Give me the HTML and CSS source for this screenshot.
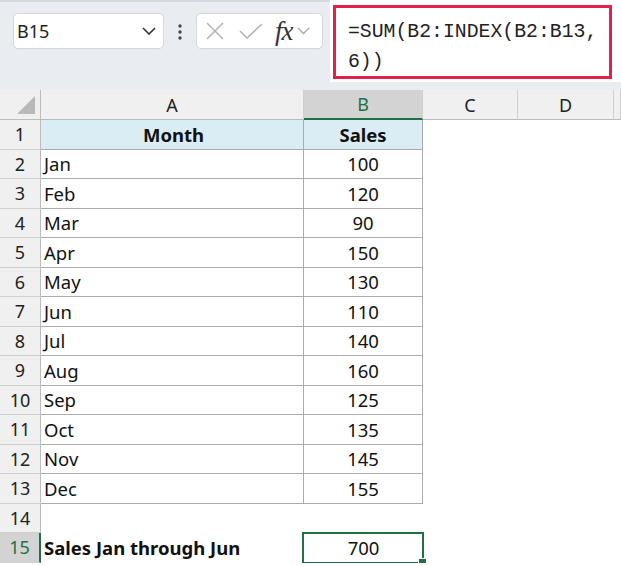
FILE: index.html
```html
<!DOCTYPE html>
<html lang="en">
<head>
<meta charset="UTF-8">
<title>Sales - SUM with INDEX</title>
<link rel="stylesheet" href="styles.css">
</head>
<body>

<!-- formula bar -->
<div class="toolbar">
    <div class="namebox">
        <span class="cellref">B15</span>
        <svg class="chevron" width="14" height="8" viewBox="0 0 14 8"><path d="M1 1 L7 7 L13 1" fill="none" stroke="#333" stroke-width="1.6"/></svg>
    </div>
    <svg class="dots" width="6" height="16" viewBox="0 0 6 16"><circle cx="3" cy="2" r="1.7" fill="#444"/><circle cx="3" cy="8" r="1.7" fill="#444"/><circle cx="3" cy="14" r="1.7" fill="#444"/></svg>
    <div class="fxbox">
        <svg class="btn-x" width="18" height="18" viewBox="0 0 18 18"><path d="M1 1 L17 17 M17 1 L1 17" stroke="#b4b4b4" stroke-width="1.6"/></svg>
        <svg class="btn-ok" width="24" height="16" viewBox="0 0 24 16"><path d="M1 8 L8 15 L23 1" fill="none" stroke="#b4b4b4" stroke-width="1.6"/></svg>
        <span class="fx">fx</span>
        <svg class="chevron-sm" width="13" height="8" viewBox="0 0 13 8"><path d="M1 1 L6.5 6.5 L12 1" fill="none" stroke="#a8a8a8" stroke-width="1.4"/></svg>
    </div>
    <div class="formula">
        <div class="formula-box">=SUM(B2:INDEX(B2:B13,<br>6))</div>
    </div>
</div>

<!-- worksheet -->
<div class="sheet">
    <div class="row head">
        <div class="corner"><svg width="18" height="18" viewBox="0 0 18 18"><path d="M18 0 L18 18 L0 18 Z" fill="#b9b9b9"/></svg></div>
        <div class="colhead">A</div>
        <div class="colhead active">B</div>
        <div class="colhead">C</div>
        <div class="colhead">D</div>
        <div class="colhead"></div>
    </div>
    <div class="row">
        <div class="rowhead">1</div>
        <div class="cell tb title">Month</div>
        <div class="cell tb title num">Sales</div>
        <div class="cell"></div><div class="cell"></div><div class="cell"></div>
    </div>
    <div class="row">
        <div class="rowhead">2</div>
        <div class="cell tb">Jan</div>
        <div class="cell tb num">100</div>
        <div class="cell"></div><div class="cell"></div><div class="cell"></div>
    </div>
    <div class="row">
        <div class="rowhead">3</div>
        <div class="cell tb">Feb</div>
        <div class="cell tb num">120</div>
        <div class="cell"></div><div class="cell"></div><div class="cell"></div>
    </div>
    <div class="row">
        <div class="rowhead">4</div>
        <div class="cell tb">Mar</div>
        <div class="cell tb num">90</div>
        <div class="cell"></div><div class="cell"></div><div class="cell"></div>
    </div>
    <div class="row">
        <div class="rowhead">5</div>
        <div class="cell tb">Apr</div>
        <div class="cell tb num">150</div>
        <div class="cell"></div><div class="cell"></div><div class="cell"></div>
    </div>
    <div class="row">
        <div class="rowhead">6</div>
        <div class="cell tb">May</div>
        <div class="cell tb num">130</div>
        <div class="cell"></div><div class="cell"></div><div class="cell"></div>
    </div>
    <div class="row">
        <div class="rowhead">7</div>
        <div class="cell tb">Jun</div>
        <div class="cell tb num">110</div>
        <div class="cell"></div><div class="cell"></div><div class="cell"></div>
    </div>
    <div class="row">
        <div class="rowhead">8</div>
        <div class="cell tb">Jul</div>
        <div class="cell tb num">140</div>
        <div class="cell"></div><div class="cell"></div><div class="cell"></div>
    </div>
    <div class="row">
        <div class="rowhead">9</div>
        <div class="cell tb">Aug</div>
        <div class="cell tb num">160</div>
        <div class="cell"></div><div class="cell"></div><div class="cell"></div>
    </div>
    <div class="row">
        <div class="rowhead">10</div>
        <div class="cell tb">Sep</div>
        <div class="cell tb num">125</div>
        <div class="cell"></div><div class="cell"></div><div class="cell"></div>
    </div>
    <div class="row">
        <div class="rowhead">11</div>
        <div class="cell tb">Oct</div>
        <div class="cell tb num">135</div>
        <div class="cell"></div><div class="cell"></div><div class="cell"></div>
    </div>
    <div class="row">
        <div class="rowhead">12</div>
        <div class="cell tb">Nov</div>
        <div class="cell tb num">145</div>
        <div class="cell"></div><div class="cell"></div><div class="cell"></div>
    </div>
    <div class="row">
        <div class="rowhead">13</div>
        <div class="cell tb">Dec</div>
        <div class="cell tb num">155</div>
        <div class="cell"></div><div class="cell"></div><div class="cell"></div>
    </div>
    <div class="row">
        <div class="rowhead">14</div>
        <div class="cell"></div>
        <div class="cell"></div>
        <div class="cell"></div><div class="cell"></div><div class="cell"></div>
    </div>
    <div class="row">
        <div class="rowhead active">15</div>
        <div class="cell bold">Sales Jan through Jun</div>
        <div class="cell num selected">700<span class="handle"></span></div>
        <div class="cell"></div><div class="cell"></div><div class="cell"></div>
    </div>
</div>

</body>
</html>
```

FILE: styles.css
```css
body {
    margin: 0;
    background: #ffffff;
    font-family: 'Noto Sans', 'Open Sans', sans-serif;
    color: #111111;
    overflow: hidden;
}

/* --- formula bar --- */
.toolbar {
    display: flex;
    align-items: flex-start;
    height: 90px;
    background: #e9edf1;
    border-top: 2px solid #d3d7db;
    box-sizing: border-box;
}

.namebox {
    display: flex;
    align-items: center;
    justify-content: space-between;
    width: 151px;
    height: 36px;
    margin: 11px 0 0 13px;
    padding: 0 7px 0 3px;
    box-sizing: border-box;
    background: #ffffff;
    border: 1px solid #d4d8dc;
    border-radius: 5px;
}

.cellref {
    font-size: 18px;
    color: #222222;
}

.dots {
    margin: 22px 0 0 13px;
}

.fxbox {
    display: flex;
    align-items: center;
    width: 127px;
    height: 36px;
    margin: 11px 0 0 13px;
    padding-left: 9px;
    box-sizing: border-box;
    background: #ffffff;
    border: 1px solid #d4d8dc;
    border-radius: 5px;
}

.btn-ok {
    margin-left: 15px;
}

.fx {
    margin-left: 12px;
    font-family: 'Liberation Serif', serif;
    font-style: italic;
    font-size: 27px;
    color: #333333;
    line-height: 1;
    letter-spacing: -1px;
}

.chevron-sm {
    margin-left: 4px;
}

.formula {
    flex: 1;
    align-self: stretch;
    margin: -2px 0 8px 7px;
    padding: 5px 9px 0 3px;
    background: #ffffff;
}

.formula-box {
    height: 74px;
    box-sizing: border-box;
    border: 3px solid #e0224c;
    padding: 9px 0 0 12px;
    font-family: 'Liberation Mono', 'DejaVu Sans Mono', monospace;
    font-size: 19.8px;
    line-height: 30px;
    color: #222222;
}

/* --- worksheet --- */
.row {
    display: grid;
    grid-template-columns: 41px 263px 119px 95px 96px 1fr;
    height: 29.5px;
}

.row.head {
    height: 30px;
}

.corner,
.colhead {
    background: #f0f0f0;
    border-bottom: 1px solid #bcbcbc;
    border-right: 1px solid #d0d0d0;
    box-sizing: border-box;
}

.corner {
    display: flex;
    align-items: flex-end;
    justify-content: flex-end;
    padding: 0 5px 5px 0;
    border-right-color: #bcbcbc;
}

.colhead {
    display: flex;
    align-items: center;
    justify-content: center;
    font-size: 18px;
    color: #222222;
}

.colhead.active {
    background: #d3d3d3;
    color: #1e7145;
    border-bottom: 2px solid #1e7145;
}

.rowhead {
    display: flex;
    align-items: center;
    justify-content: center;
    background: #f0f0f0;
    border-right: 1px solid #bcbcbc;
    border-bottom: 1px solid #d0d0d0;
    box-sizing: border-box;
    font-size: 18px;
    color: #222222;
}

.rowhead.active {
    background: #d3d3d3;
    color: #1e7145;
    border-right: 2px solid #1e7145;
}

.cell {
    display: flex;
    align-items: center;
    padding-left: 3px;
    box-sizing: border-box;
    font-size: 18.5px;
    white-space: nowrap;
}

.cell.tb {
    border-right: 1px solid #ababab;
    border-bottom: 1px solid #ababab;
}

.cell.title {
    background: #daedf4;
    font-weight: bold;
    justify-content: center;
}

.cell.bold {
    font-weight: bold;
}

.cell.num {
    justify-content: center;
    padding-left: 0;
}

.cell.selected {
    position: relative;
}

.cell.selected::before {
    content: '';
    position: absolute;
    top: -1px;
    left: -2px;
    right: -1px;
    bottom: -1px;
    border: 2px solid #1e7145;
}

.handle {
    position: absolute;
    right: -4px;
    bottom: -4px;
    width: 7px;
    height: 7px;
    background: #1e7145;
    border: 1px solid #ffffff;
}
```
